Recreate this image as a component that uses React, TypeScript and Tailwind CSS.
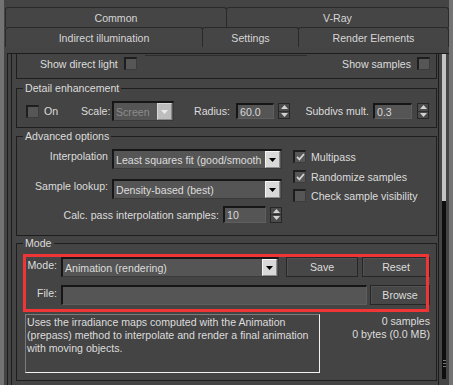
import React from "react";

function Tab({ label, w, first }: { label: string; w: string; first?: boolean }) {
    return (
        <div
            className={`${w} ${first ? "" : "-ml-px"} h-full flex items-center justify-center rounded-t-[3px] border-t border-l border-r border-[#2a2a2a] bg-[#454545] text-[#d6d6d6]`}
        >
            {label}
        </div>
    );
}

function Check({ on = false }: { on?: boolean }) {
    return (
        <div className="w-[13px] h-[13px] shrink-0 flex items-center justify-center bg-[#565656] border-t-2 border-l-2 border-[#1e1e1e] border-r border-b border-r-[#3c3c3c] border-b-[#3c3c3c]">
            {on && (
                <svg width="9" height="8" viewBox="0 0 9 8">
                    <path d="M1 3.8 L3.4 6.4 L8 1" stroke="#d4d4d4" strokeWidth="1.7" fill="none" />
                </svg>
            )}
        </div>
    );
}

function Spinner() {
    return (
        <div className="w-[12px] h-[16px] shrink-0 flex flex-col border border-[#262626] bg-[#4b4b4b]">
            <div className="flex-1 flex items-center justify-center border-b border-[#2e2e2e]">
                <svg width="7" height="4" viewBox="0 0 7 4">
                    <path d="M0 4 L3.5 0 L7 4 Z" fill="#d2d2d2" />
                </svg>
            </div>
            <div className="flex-1 flex items-center justify-center">
                <svg width="7" height="4" viewBox="0 0 7 4">
                    <path d="M0 0 L3.5 4 L7 0 Z" fill="#d2d2d2" />
                </svg>
            </div>
        </div>
    );
}

function Field({ w, h = "h-[16px]", value }: { w: string; h?: string; value?: string }) {
    return (
        <div
            className={`${w} ${h} shrink-0 flex items-center pl-[2px] bg-[#555555] border-t-2 border-l-2 border-[#161616] border-r border-b border-r-[#5f5f5f] border-b-[#5f5f5f] text-[#d8d8d8]`}
        >
            {value}
        </div>
    );
}

function Drop({ w, text, disabled }: { w: string; text: string; disabled?: boolean }) {
    return (
        <div
            className={`${w} h-[20px] shrink-0 flex items-stretch pr-[1px] bg-[#555555] border-t-2 border-l-2 border-[#171717] border-r border-b border-r-[#3a3a3a] border-b-[#3a3a3a]`}
        >
            <div
                className={`flex-1 min-w-0 overflow-hidden whitespace-nowrap pl-[2px] flex items-center ${disabled ? "text-[#8c8c8c]" : "text-[#dcdcdc]"}`}
            >
                {text}
            </div>
            {disabled ? (
                <div className="w-[15px] shrink-0 flex items-center justify-center bg-[#bdbdbd] border-t border-l border-[#d6d6d6] border-r border-b border-r-[#8a8a8a] border-b-[#8a8a8a]">
                    <svg width="7" height="4" viewBox="0 0 7 4">
                        <path d="M0 0 L3.5 4 L7 0 Z" fill="#ececec" />
                    </svg>
                </div>
            ) : (
                <div className="w-[15px] shrink-0 flex items-center justify-center bg-[#d9d9d9] border-t border-l border-[#f6f6f6] border-r border-b border-r-[#8e8e8e] border-b-[#8e8e8e]">
                    <svg width="7" height="4" viewBox="0 0 7 4">
                        <path d="M0 0 L3.5 4 L7 0 Z" fill="#000000" />
                    </svg>
                </div>
            )}
        </div>
    );
}

function Btn({ label, w, extra = "" }: { label: string; w: string; extra?: string }) {
    return (
        <div
            className={`${w} ${extra} h-[20px] shrink-0 flex items-center justify-center bg-[#474747] border border-[#262626] shadow-[inset_1px_1px_0_#525252] text-[#dcdcdc]`}
        >
            {label}
        </div>
    );
}

export default function App() {
    return (
        <div className="w-[453px] h-[385px] overflow-hidden flex flex-col bg-[#444444] border-l-4 border-r-4 border-[#737373] [font-family:'Liberation_Sans',Arial,sans-serif] text-[10.6px] leading-[12px] text-[#dcdcdc]">
            {/* tabs */}
            <div className="pt-[7px] pl-[1px] flex flex-col">
                <div className="flex h-[20px]">
                    <Tab label="Common" w="w-[222px]" first />
                    <Tab label="V-Ray" w="w-[223px]" />
                </div>
                <div className="flex h-[20px]">
                    <Tab label="Indirect illumination" w="w-[198px]" first />
                    <Tab label="Settings" w="w-[97px]" />
                    <Tab label="Render Elements" w="w-[151px]" />
                </div>
            </div>

            {/* content frame */}
            <div className="mt-[6px] ml-[3px] flex-1 min-h-0 flex border-l border-t border-[#1c1c1c]">
                <div className="ml-[3px] w-[428px] flex flex-col pl-[4px] pr-[1px] border-l border-r border-[#1c1c1c]">
                    {/* tail of previous group */}
                    <div className="h-[25px] shrink-0 flex flex-col border-l border-r border-b border-[#1e1e1e]">
                        <div className="mt-[1px] ml-[128px] w-[162px] h-px bg-[#2c2c2c]" />
                        <div className="mt-[1px] h-[13px] flex items-center pl-[23px] pr-[6px]">
                            <span>Show direct light</span>
                            <div className="ml-[6px]">
                                <Check />
                            </div>
                            <span className="ml-auto">Show samples</span>
                            <div className="ml-[6px]">
                                <Check />
                            </div>
                        </div>
                    </div>

                    {/* Detail enhancement */}
                    <fieldset className="mt-[3px] shrink-0 border border-[#1e1e1e]">
                        <legend className="ml-[6px] px-[2px] h-[12px] leading-[12px]">Detail enhancement</legend>
                        <div className="mt-[7px] mb-[6px] h-[20px] flex items-center pl-[9px]">
                            <Check />
                            <span className="ml-[5px] w-[37px]">On</span>
                            <span className="w-[31px]">Scale:</span>
                            <Drop w="w-[62px]" text="Screen" disabled />
                            <span className="w-[62px] text-right pr-[6px]">Radius:</span>
                            <Field w="w-[38px]" value="60.0" />
                            <div className="ml-[4px]">
                                <Spinner />
                            </div>
                            <span className="w-[83px] text-right pr-[4px]">Subdivs mult.</span>
                            <Field w="w-[39px]" value="0.3" />
                            <div className="ml-[5px]">
                                <Spinner />
                            </div>
                        </div>
                    </fieldset>

                    {/* Advanced options */}
                    <fieldset className="mt-[2px] shrink-0 border border-[#1e1e1e]">
                        <legend className="ml-[6px] px-[2px] h-[12px] leading-[12px]">Advanced options</legend>
                        <div className="flex pb-[12px]">
                            <div className="w-[265px] flex flex-col">
                                <div className="mt-[7px] h-[20px] flex items-start">
                                    <span className="w-[91px] text-right pt-[1px]">Interpolation</span>
                                    <div className="ml-[4px]">
                                        <Drop w="w-[170px]" text="Least squares fit (good/smooth" />
                                    </div>
                                </div>
                                <div className="mt-[10px] h-[20px] flex items-start">
                                    <span className="w-[91px] text-right pt-[1px]">Sample lookup:</span>
                                    <div className="ml-[4px]">
                                        <Drop w="w-[170px]" text="Density-based (best)" />
                                    </div>
                                </div>
                                <div className="mt-[7px] h-[17px] flex items-center justify-end">
                                    <span>Calc. pass interpolation samples:</span>
                                    <div className="ml-[4px]">
                                        <Field w="w-[43px]" h="h-[17px]" value="10" />
                                    </div>
                                    <div className="ml-[4px]">
                                        <Spinner />
                                    </div>
                                </div>
                            </div>
                            <div className="ml-[11px] flex flex-col">
                                <div className="mt-[8px] h-[13px] flex items-center">
                                    <Check on />
                                    <span className="ml-[5px]">Multipass</span>
                                </div>
                                <div className="mt-[7px] h-[13px] flex items-center">
                                    <Check on />
                                    <span className="ml-[5px]">Randomize samples</span>
                                </div>
                                <div className="mt-[6px] h-[13px] flex items-center">
                                    <Check />
                                    <span className="ml-[5px]">Check sample visibility</span>
                                </div>
                            </div>
                        </div>
                    </fieldset>

                    {/* Mode */}
                    <fieldset className="mt-[1px] shrink-0 border border-[#1e1e1e]">
                        <legend className="ml-[6px] px-[2px] h-[12px] leading-[12px]">Mode</legend>
                        <div className="relative flex flex-col">
                            <div className="mt-[8px] h-[20px] flex items-start">
                                <span className="w-[40px] text-right pt-[2px]">Mode:</span>
                                <div className="ml-[4px]">
                                    <Drop w="w-[218px]" text="Animation (rendering)" />
                                </div>
                                <Btn label="Save" w="w-[72px]" extra="ml-[7px]" />
                                <Btn label="Reset" w="w-[68px]" extra="ml-[4px]" />
                            </div>
                            <div className="mt-[8px] h-[20px] flex items-start">
                                <span className="w-[40px] text-right pt-[2px]">File:</span>
                                <div className="ml-[4px]">
                                    <Field w="w-[306px]" h="h-[20px]" />
                                </div>
                                <Btn label="Browse" w="w-[60px]" extra="ml-[3px]" />
                            </div>
                            <div className="absolute left-[6px] top-[5px] w-[406px] h-[58px] border-[3px] border-[#ef3535] pointer-events-none" />
                        </div>
                        <div className="mt-[9px] mb-[7px] h-[59px] flex">
                            <div className="ml-[8px] w-[295px] h-full pl-[1px] pt-[1px] leading-[13px] whitespace-nowrap border-l border-t border-[#7c7c7c] border-r border-b border-r-[#f2f2f2] border-b-[#f2f2f2]">
                                Uses the irradiance maps computed with the Animation
                                <br />
                                (prepass) method to interpolate and render a final animation
                                <br />
                                with moving objects.
                            </div>
                            <div className="flex-1 pt-[1px] pr-[6px] text-right leading-[13px]">
                                0 samples
                                <br />
                                0 bytes (0.0 MB)
                            </div>
                        </div>
                    </fieldset>
                </div>

                {/* scrollbar */}
                <div className="pl-[3px] flex flex-col">
                    <div className="w-[4px] h-[147px] bg-[#c2c2c2]" />
                    <div className="w-[4px] h-[178px] bg-[#0e0e0e] flex flex-col items-center pt-[159px] gap-[2px]">
                        <div className="w-[3px] h-px bg-[#7a7a7a]" />
                        <div className="w-[3px] h-px bg-[#7a7a7a]" />
                        <div className="w-[3px] h-px bg-[#7a7a7a]" />
                    </div>
                </div>
            </div>
        </div>
    );
}
